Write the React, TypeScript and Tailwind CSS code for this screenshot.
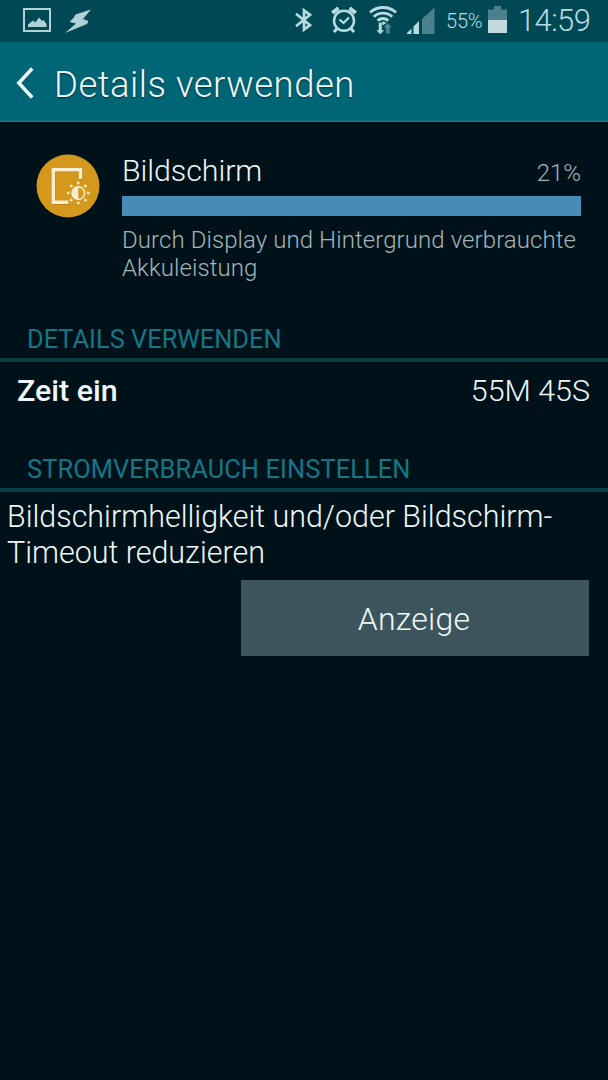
import type { ReactNode } from 'react'

const usage = {
	name: 'Bildschirm',
	percent: '21%',
	description: 'Durch Display und Hintergrund verbrauchte Akkuleistung',
}

const PictureIcon = () => (
	<svg width="28" height="24" viewBox="0 0 28 24">
		<rect x="1" y="1" width="26" height="22" fill="none" stroke="#b0d2d7" strokeWidth="2" />
		<path d="M5 19v-2.500l5-4 2.500 2 3.500-5 3 3.500 1.500-1 3 4v3z" fill="#b0d2d7" />
	</svg>
)

const FlashIcon = () => (
	<svg width="27" height="25" viewBox="0 0 27 25">
		<path d="M26 1.500 10.500 6.500 8.500 10 4.500 14l6.500 1.500L0 25l22-9 1.500-3-5.500-2z" fill="#b0d2d7" />
	</svg>
)

const BluetoothIcon = () => (
	<svg width="18" height="26" viewBox="0 0 18 26" fill="none" stroke="#b5dce0" strokeWidth="2.700">
		<path d="M1 6.800 15 18.200 9 22.500v-19L15 7.800 1 19.200" />
	</svg>
)

const AlarmIcon = () => (
	<svg width="26" height="27" viewBox="0 0 26 27" fill="none" stroke="#b5dce0">
		<circle cx="13" cy="14.800" r="10" strokeWidth="2.500" />
		<path d="m8.500 13.500 4 3.500 5.500-5.500" strokeWidth="2.200" />
		<path d="m1.300 7 6.200-4.800M24.700 7l-6.200-4.800" strokeWidth="4" />
		<path d="m6 22.500-3 3.500M20 22.500l3 3.500" strokeWidth="3" />
	</svg>
)

const WifiIcon = () => (
	<svg width="28" height="30" viewBox="0 0 28 30" fill="none" stroke="#b5dce0" strokeWidth="2.900">
		<path d="M1 7.500a19.500 19.500 0 0 1 26 0M4.800 11.700a13.500 13.500 0 0 1 18.400 0M8.700 15.600a7.900 7.900 0 0 1 10.600 0" />
		<path d="m10.500 17.700 3.500-1.200 3.500 1.200-3.500 2.600z" fill="#b5dce0" stroke="none" />
		<path d="M9.500 17.500h3.500V25h2.500l-4.200 4.500L7 25h2.500z" fill="#b5dce0" stroke="#004854" strokeWidth=".5" />
		<path d="M17 28.500v-6h-2.300l4-4.500 4 4.500h-2.200v6z" fill="#4f8790" stroke="none" />
	</svg>
)

const SignalIcon = () => (
	<svg width="28" height="27" viewBox="0 0 28 27">
		<path d="M0 27v-1l4.500-4.500V27zM6.500 27v-7.500L12 14v13z" fill="#b5dce0" />
		<path d="M15 27V12L27.500.500V27z" fill="#4a818a" />
	</svg>
)

const BatteryIcon = () => (
	<svg width="19" height="28" viewBox="0 0 19 28">
		<path d="M0 3.500h6V0h7v3.500h6V15H0z" fill="#4a818a" />
		<path d="M0 14h19V27H0z" fill="#c0dade" />
	</svg>
)

const rays = [0, 45, 90, 135, 180, 225, 270, 315]

const DisplayIcon = () => (
	<svg width="64" height="64" viewBox="0 0 64 64">
		<circle cx="32" cy="32" r="31.500" fill="#d4991c" />
		<g fill="none" stroke="#8c640f" strokeWidth="3" transform="translate(.700 1)" opacity=".5">
			<path d="M44.500 25V15.800H17.400v32.500h15" />
		</g>
		<path d="M44.500 25V15.800H17.400v32.500h15" fill="none" stroke="#f8edd2" strokeWidth="3.400" />
		<circle cx="42.300" cy="39" r="6.300" fill="#d4991c" stroke="#f8edd2" strokeWidth="1.600" />
		<path d="M42.300 32.700a6.300 6.300 0 0 0 0 12.600z" fill="#f8edd2" />
		{rays.map((angle) => (
			<circle
				key={angle}
				cx="42.300"
				cy="29"
				r="1.400"
				fill="#f8edd2"
				transform={`rotate(${angle} 42.300 39)`}
			/>
		))}
	</svg>
)

const StatusBar = () => (
	<div className="flex h-[42px] items-start bg-[#004854] text-[#b5dce0]">
		<div className="flex gap-[14px] pl-[23px] pt-2">
			<PictureIcon />
			<FlashIcon />
		</div>
		<div className="ml-auto flex items-start pr-[17px]">
			<div className="mr-[18px] pt-[7px]">
				<BluetoothIcon />
			</div>
			<div className="mr-[12px] pt-[6px]">
				<AlarmIcon />
			</div>
			<div className="mr-[10px] pt-[5px]">
				<WifiIcon />
			</div>
			<div className="mr-[11px] pt-[7px]">
				<SignalIcon />
			</div>
			<span className="mr-[6px] w-[36px] whitespace-nowrap text-[20px] leading-[42px] tracking-[-0.2px]">55%</span>
			<div className="mr-[11px] pt-[6px]">
				<BatteryIcon />
			</div>
			<span className="w-[73px] whitespace-nowrap text-[31px] font-light leading-[41px] tracking-[-0.600px]">
				14:59
			</span>
		</div>
	</div>
)

const SectionHeader = ({ children }: { children: ReactNode }) => (
	<h2 className="flex h-[38px] items-start border-b-4 border-[#0a3f48] pl-[27px] text-[25.400px] font-normal leading-[30px] text-[#157687]">
		{children}
	</h2>
)

export default function App() {
	return (
		<div className="flex h-[1080px] w-[608px] flex-col overflow-hidden bg-[#001219] font-[Roboto,sans-serif] font-light text-[#eef8fa]">
			<StatusBar />
			<header className="flex h-[80px] items-center border-b-2 border-[#157582] bg-[#006676]">
				<svg width="18" height="32" viewBox="0 0 18 32" className="ml-4 mt-[3px]">
					<path d="M16.200 1.500 2.800 16l13.400 14.500" fill="none" stroke="#eef8fa" strokeWidth="3.500" />
				</svg>
				<h1 className="ml-[20px] pt-[7px] text-[36.500px] leading-[44px] tracking-[0.500px] [text-shadow:0_1px_2px_#00333c]">
					Details verwenden
				</h1>
			</header>

			<section className="flex h-[202px] pl-[36px] pr-[27px] pt-[31px]">
				<div className="mr-[22px] pt-px">
					<DisplayIcon />
				</div>
				<div className="flex-1">
					<div className="flex h-[43px] items-baseline justify-between">
						<span className="text-[30.400px] leading-[36px] tracking-[-0.080px]">{usage.name}</span>
						<span className="text-[24px] text-[#a3b5ba]">{usage.percent}</span>
					</div>
					<div className="h-5 bg-[#478cb7]" />
					<p className="mt-[10px] text-[24px] leading-[28px] tracking-[0.080px] text-[#a3b5ba]">
						{usage.description}
					</p>
				</div>
			</section>

			<SectionHeader>DETAILS VERWENDEN</SectionHeader>
			<div className="flex h-[92px] justify-between pl-[17px] pr-[18px] pt-[11px] text-[30.400px] leading-[36px]">
				<span className="font-medium">Zeit ein</span>
				<span>55M 45S</span>
			</div>

			<SectionHeader>
				<span className="tracking-[0.100px]">STROMVERBRAUCH EINSTELLEN</span>
			</SectionHeader>
			<p className="pl-[7px] pt-[7px] text-[30.450px] leading-[35.500px]">
				Bildschirmhelligkeit und/oder Bildschirm-
				<br />
				Timeout reduzieren
			</p>
			<button className="ml-auto mr-[19px] mt-[10px] h-[76px] w-[348px] bg-[#3c545c] pr-[2px] pt-[2px] text-[32px] tracking-[0.200px]">
				Anzeige
			</button>
		</div>
	)
}
